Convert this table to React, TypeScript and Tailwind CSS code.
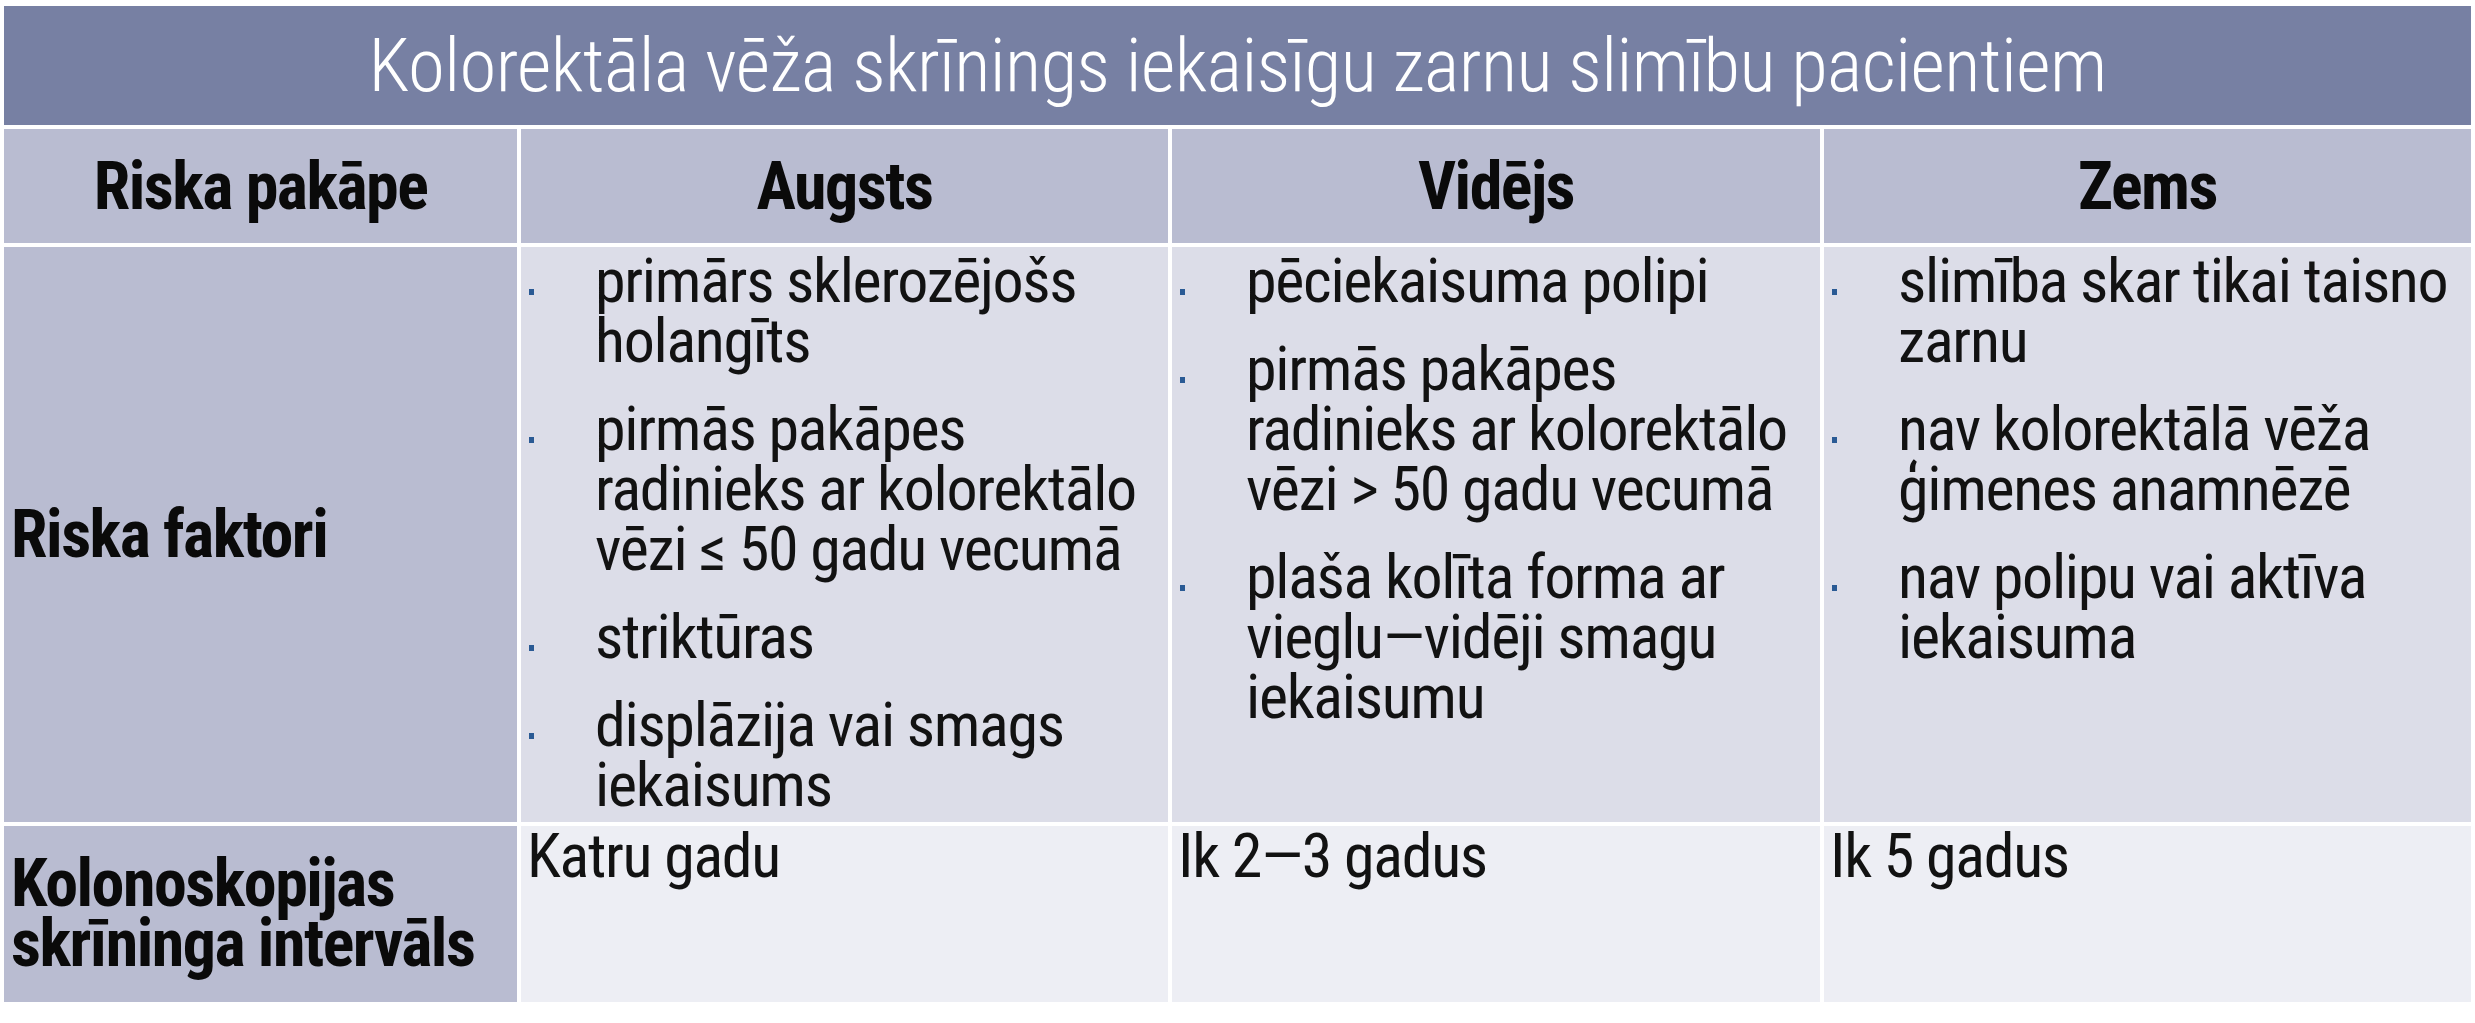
import React from "react";

const FONT = "font-['Roboto','Liberation_Sans',sans-serif] font-stretch-condensed";

type Items = string[][];

const col2: Items = [
  ["primārs sklerozējošs", "holangīts"],
  ["pirmās pakāpes", "radinieks ar kolorektālo", "vēzi ≤ 50 gadu vecumā"],
  ["striktūras"],
  ["displāzija vai smags", "iekaisums"],
];
const col3: Items = [
  ["pēciekaisuma polipi"],
  ["pirmās pakāpes", "radinieks ar kolorektālo", "vēzi > 50 gadu vecumā"],
  ["plaša kolīta forma ar", "vieglu—vidēji smagu", "iekaisumu"],
];
const col4: Items = [
  ["slimība skar tikai taisno", "zarnu"],
  ["nav kolorektālā vēža", "ģimenes anamnēzē"],
  ["nav polipu vai aktīva", "iekaisuma"],
];

const BODY = "text-[62px] leading-[60px] tracking-[-1.3px] text-[#121212]";
const HEAD = "text-[66px] font-bold tracking-[-1.5px] text-[#0a0a0a]";

function BulletCell({ items }: { items: Items }) {
  return (
    <div className="bg-[#dcdde8] pt-[4px] flex flex-col gap-[28px]">
      {items.map((lines, i) => (
        <div key={i} className="flex">
          <div className="w-[74px] shrink-0 pl-[8px]">
            <div className="mt-[38px] w-[5px] h-[6px] bg-[#2a5a94]" />
          </div>
          <div className={`${BODY} whitespace-nowrap`}>
            {lines.map((l, j) => (
              <div key={j}>{l}</div>
            ))}
          </div>
        </div>
      ))}
    </div>
  );
}

export default function App() {
  return (
    <div className={`bg-white w-[2475px] h-[1023px] pt-[6px] pl-[4px] ${FONT}`}>
      <div className="grid grid-cols-[513px_647px_648px_647px] grid-rows-[119px_114px_575px_176px] gap-[4px]">
        <div className="col-span-4 bg-[#7780a3] flex items-center justify-center text-white text-[75px] font-light tracking-[-0.6px]">
          Kolorektāla vēža skrīnings iekaisīgu zarnu slimību pacientiem
        </div>

        <div className={`bg-[#b9bcd1] flex items-center justify-center ${HEAD}`}>Riska pakāpe</div>
        <div className={`bg-[#b9bcd1] flex items-center justify-center ${HEAD}`}>Augsts</div>
        <div className={`bg-[#b9bcd1] flex items-center justify-center ${HEAD}`}>Vidējs</div>
        <div className={`bg-[#b9bcd1] flex items-center justify-center ${HEAD}`}>Zems</div>

        <div className={`bg-[#b9bcd1] flex items-center pl-[7px] ${HEAD}`}>Riska faktori</div>
        <BulletCell items={col2} />
        <BulletCell items={col3} />
        <BulletCell items={col4} />

        <div className={`bg-[#b9bcd1] flex items-center pl-[7px] leading-[60px] ${HEAD}`}>
          <div>
            Kolonoskopijas
            <br />
            skrīninga intervāls
          </div>
        </div>
        <div className={`bg-[#edeef4] pl-[6px] ${BODY}`}>Katru gadu</div>
        <div className={`bg-[#edeef4] pl-[6px] ${BODY}`}>Ik 2—3 gadus</div>
        <div className={`bg-[#edeef4] pl-[6px] ${BODY}`}>Ik 5 gadus</div>
      </div>
    </div>
  );
}
